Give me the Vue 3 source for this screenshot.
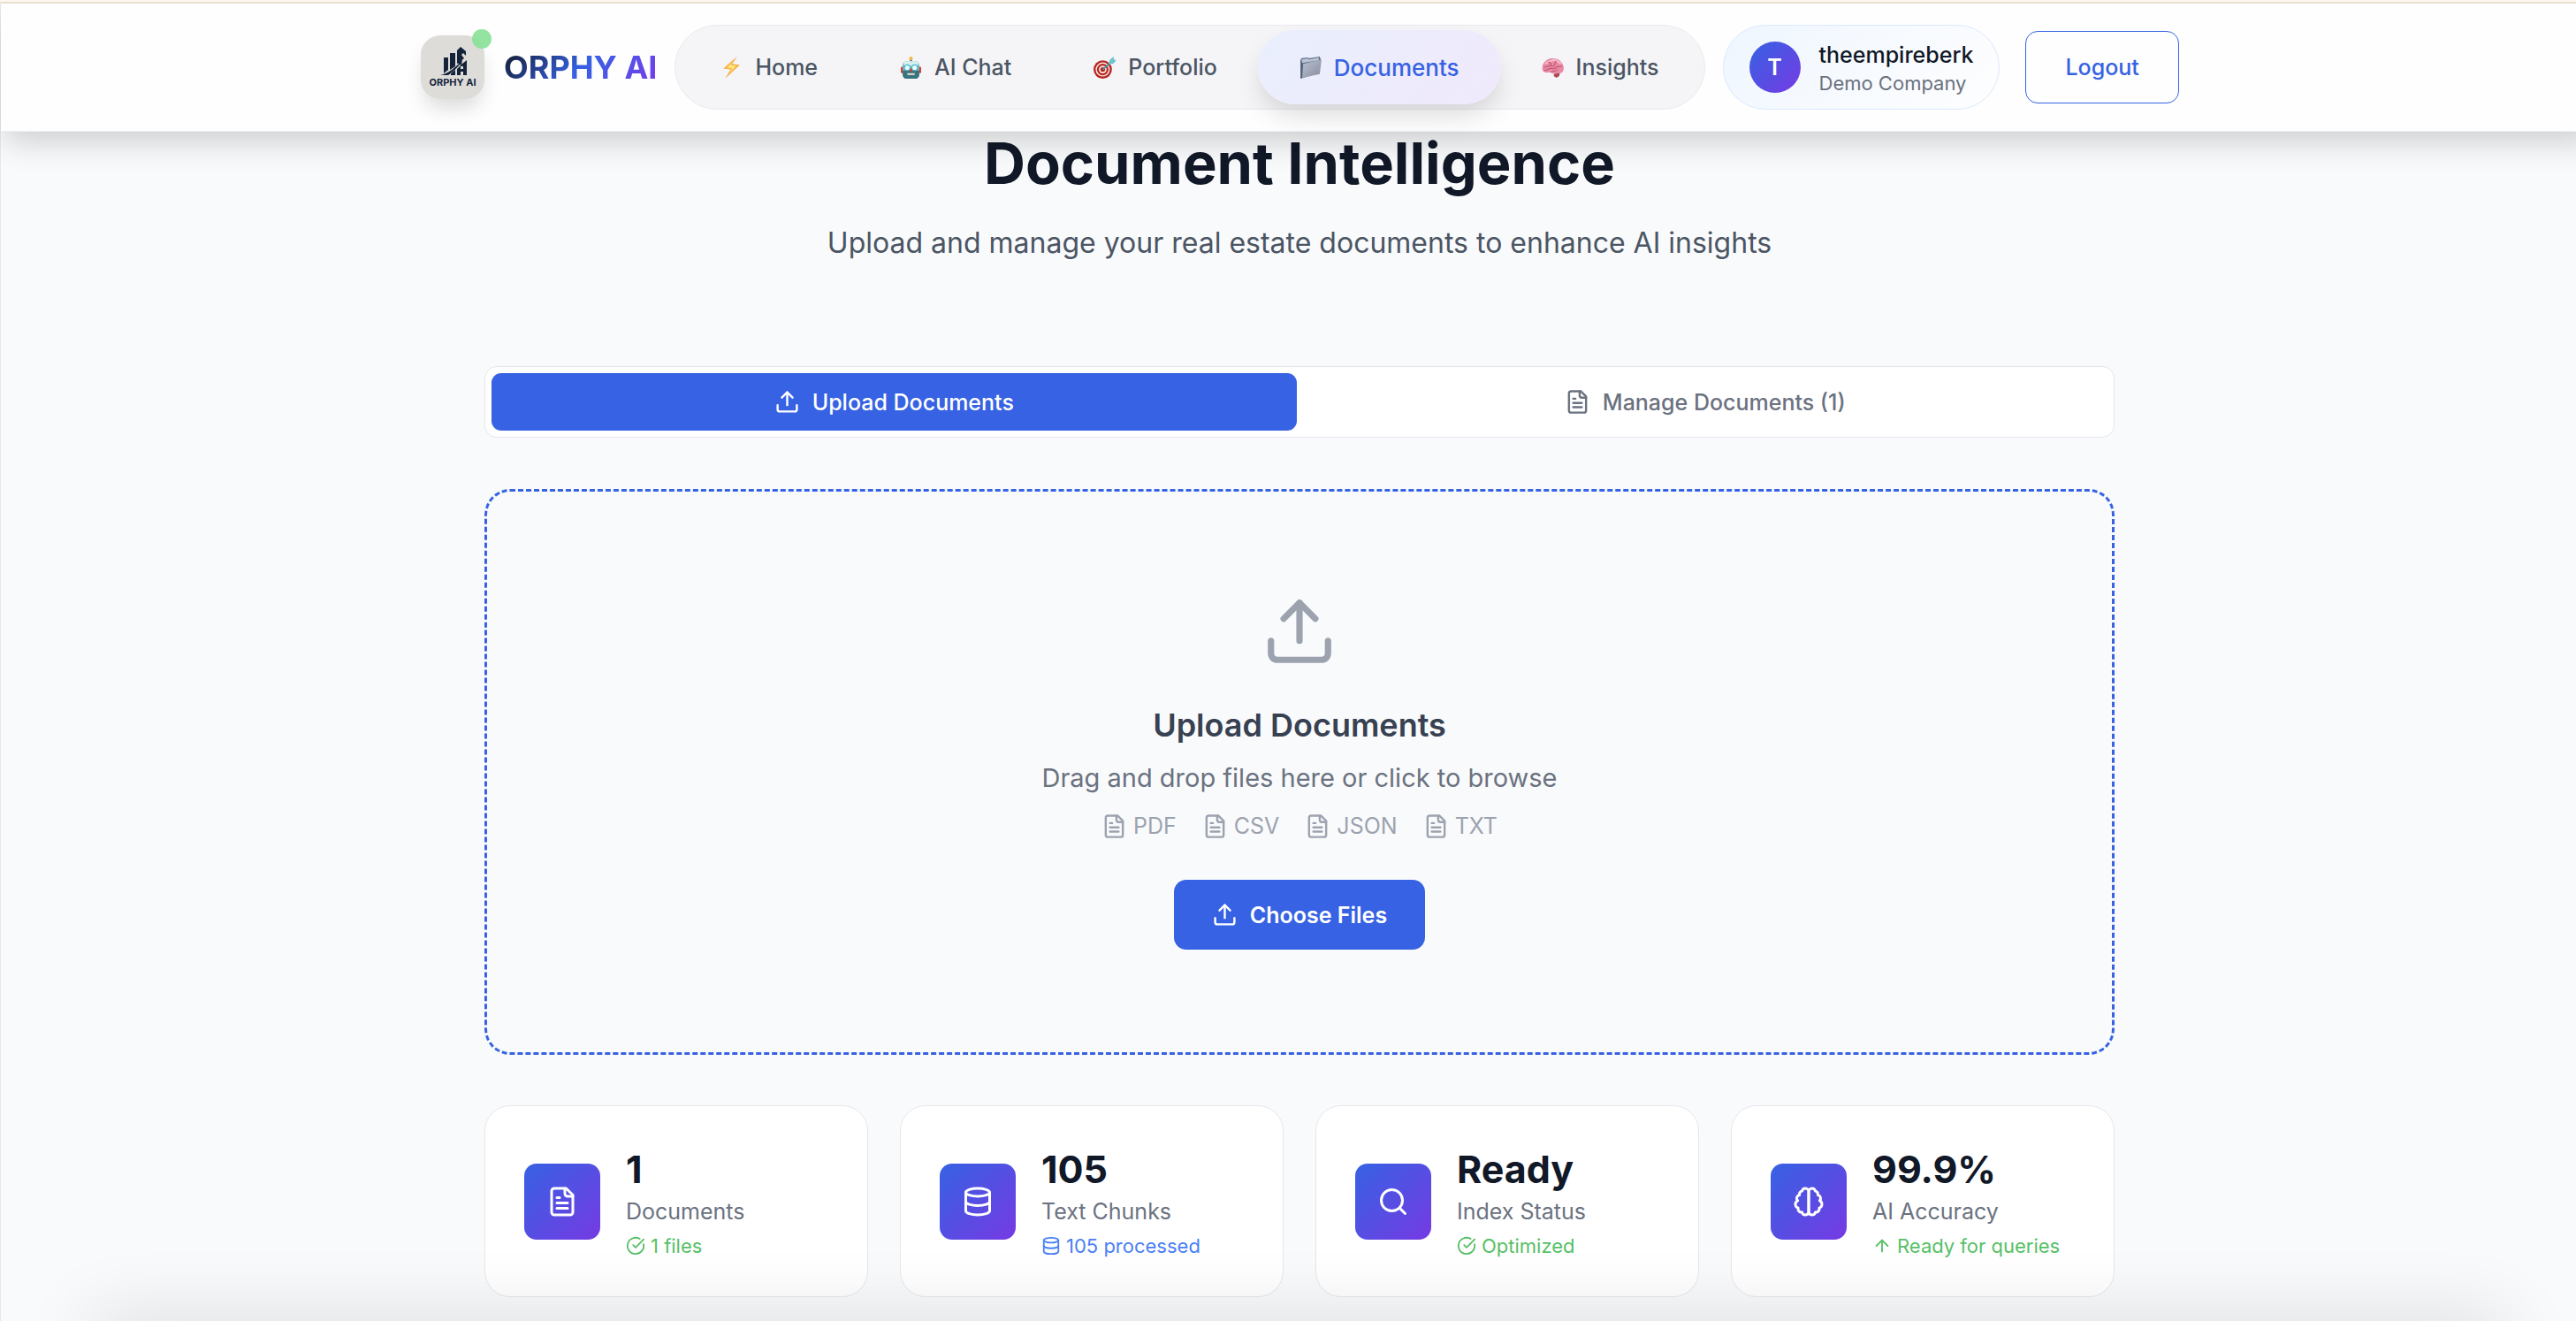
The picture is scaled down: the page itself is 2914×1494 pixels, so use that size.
<script setup>
import { h } from 'vue'

const shapes = {
  upload: [
    'M21 15v4a2 2 0 0 1-2 2H5a2 2 0 0 1-2-2v-4',
    'M17 8l-5-5-5 5',
    'M12 3v12',
  ],
  file: [
    'M15 2H6a2 2 0 0 0-2 2v16a2 2 0 0 0 2 2h12a2 2 0 0 0 2-2V7Z',
    'M14 2v4a2 2 0 0 0 2 2h4',
    'M10 9H8',
    'M16 13H8',
    'M16 17H8',
  ],
  database: [
    'M3 5a9 3 0 1 0 18 0a9 3 0 1 0-18 0',
    'M3 5v14a9 3 0 0 0 18 0V5',
    'M3 12a9 3 0 0 0 18 0',
  ],
  search: ['M3 11a8 8 0 1 0 16 0a8 8 0 1 0-16 0', 'M21 21l-4-4'],
  brain: [
    'M9.5 2A2.5 2.5 0 0 1 12 4.5v15a2.5 2.5 0 0 1-4.96.44 2.5 2.5 0 0 1-2.96-3.08 3 3 0 0 1-.34-5.58 2.5 2.5 0 0 1 1.32-4.24 2.5 2.5 0 0 1 1.98-3A2.5 2.5 0 0 1 9.5 2Z',
    'M14.5 2A2.5 2.5 0 0 0 12 4.5v15a2.5 2.5 0 0 0 4.96.44 2.5 2.5 0 0 0 2.96-3.08 3 3 0 0 0 .34-5.58 2.5 2.5 0 0 0-1.32-4.24 2.5 2.5 0 0 0-1.98-3A2.5 2.5 0 0 0 14.5 2Z',
  ],
  check: ['M21.8 10A10 10 0 1 1 17 3.34', 'M9 11l3 3L22 4'],
  arrow: ['M5 12l7-7 7 7', 'M12 19V5'],
}

const Icon = (props) =>
  h(
    'svg',
    {
      viewBox: '0 0 24 24',
      width: props.size,
      height: props.size,
      fill: 'none',
      stroke: 'currentColor',
      'stroke-width': 2,
      'stroke-linecap': 'round',
      'stroke-linejoin': 'round',
      'aria-hidden': 'true',
    },
    shapes[props.name].map((d) => h('path', { d })),
  )
Icon.props = ['name', 'size']

const links = [
  { id: 'home', label: 'Home' },
  { id: 'chat', label: 'AI Chat' },
  { id: 'portfolio', label: 'Portfolio' },
  { id: 'documents', label: 'Documents', active: true },
  { id: 'insights', label: 'Insights' },
]

const formats = ['PDF', 'CSV', 'JSON', 'TXT']

const stats = [
  { icon: 'file', value: '1', label: 'Documents', noteIcon: 'check', note: '1 files', tone: 'green' },
  { icon: 'database', value: '105', label: 'Text Chunks', noteIcon: 'database', note: '105 processed', tone: 'blue' },
  { icon: 'search', value: 'Ready', label: 'Index Status', noteIcon: 'check', note: 'Optimized', tone: 'green' },
  { icon: 'brain', value: '99.9%', label: 'AI Accuracy', noteIcon: 'arrow', note: 'Ready for queries', tone: 'green' },
]
</script>

<template>
  <div class="page">
    <header class="topbar">
      <div class="topbar-inner">
        <a class="brand" href="#">
          <span class="logo">
            <svg viewBox="0 0 72 72" width="72" height="72" aria-hidden="true">
              <g fill="#14233a">
                <path d="M26 25h5v14l-5 4z" />
                <path d="M33 20h6v15l-6 4z" />
                <path d="M41 17l4-4 6 5v5l-3-3-2 2 3 4-8 6z" />
                <path d="M22 45c8-2 14-6 21-13l-2-1 6-4-1 7-2-1c-5 6-9 9-13 12z" />
                <path fill-rule="evenodd" d="M41 38l6-6 5-4v17H41zM45 35h3v3h-3zM45 41h3v4h-3z" />
                <path d="M34 43l5-4v6h-5z" />
              </g>
              <text x="36" y="57" text-anchor="middle" font-family="Inter, sans-serif" font-size="11" font-weight="700" fill="#14233a">ORPHY AI</text>
            </svg>
            <span class="status-dot"></span>
          </span>
          <span class="brand-name">ORPHY AI</span>
        </a>

        <nav class="nav">
          <a v-for="link in links" :key="link.id" class="nav-link" :class="{ active: link.active }" href="#">
            <svg v-if="link.id === 'home'" viewBox="0 0 24 24" width="25" height="25" aria-hidden="true">
              <path d="M18 0L3 13l8 1-6 10L21 9l-8-1z" fill="#f6b04c" />
              <path d="M15 4L7 12l6 1-4 6 8-9-6-1z" fill="#ffe873" />
            </svg>
            <svg v-else-if="link.id === 'chat'" viewBox="0 0 24 24" width="25" height="25" aria-hidden="true">
              <rect x="1" y="11" width="22" height="7" rx="1" fill="#d43a35" />
              <rect x="11" y="1" width="2" height="5" fill="#51466b" />
              <circle cx="12" cy="2" r="2" fill="#f3b83f" />
              <rect x="3" y="5" width="18" height="19" rx="4" fill="#79b5bd" />
              <path d="M3 15h18v5a4 4 0 0 1-4 4H7a4 4 0 0 1-4-4z" fill="#38747f" />
              <rect x="4" y="5" width="16" height="5" rx="3" fill="#d8f0ee" />
              <circle cx="8" cy="12" r="3" fill="#e9feff" stroke="#42b9ce" />
              <circle cx="16" cy="12" r="3" fill="#e9feff" stroke="#42b9ce" />
              <path d="M12 12l2 4h-4z" fill="#d43a35" />
              <path d="M8 18h8v2H8z" fill="#e9d9d0" />
            </svg>
            <svg v-else-if="link.id === 'portfolio'" viewBox="0 0 24 24" width="25" height="25" aria-hidden="true">
              <circle cx="10" cy="14" r="10" fill="#b9251f" />
              <circle cx="10" cy="14" r="7" fill="none" stroke="#f7e9e6" stroke-width="1.4" />
              <circle cx="10" cy="14" r="3.4" fill="none" stroke="#f7e9e6" stroke-width="1.6" />
              <path d="M10 14l8-7" stroke="#3e98a6" stroke-width="1.6" />
              <path d="M16 8l2-5 4-3v3l3 1-4 4z" fill="#6fc3cc" />
            </svg>
            <svg v-else-if="link.id === 'documents'" viewBox="0 0 24 24" width="25" height="25" aria-hidden="true">
              <path d="M1 4l1-2 7-1 1 1 12-2 1 3-2 15L1 24z" fill="#56667f" />
              <path d="M2 3l7-1 1 1 11-2v3L3 7z" fill="#b9c3d3" />
              <path d="M4 8l20-5-2 16-19 4z" fill="url(#folder)" />
              <defs>
                <linearGradient id="folder" x1="0" y1="0" x2="1" y2="1">
                  <stop offset="0" stop-color="#bcc2cf" />
                  <stop offset="1" stop-color="#858c9f" />
                </linearGradient>
              </defs>
            </svg>
            <svg v-else viewBox="0 0 24 24" width="25" height="25" aria-hidden="true">
              <path d="M14 17h6l-1 4-3 2-3-2z" fill="#a94b54" />
              <path d="M1 15C-1 9 4 3 10 2c7-1 13 3 14 10 0 5-3 7-7 6-3 2-6 0-8-1-4 1-7 0-8-2z" fill="#e98aa4" />
              <path d="M4 8c3-3 5-3 8-4 4-1 7 2 9 4" stroke="#f8bccb" stroke-width="2" fill="none" />
              <path d="M3 12c2-3 5 0 7-3M7 6c2 0 3 1 3 3s3 2 4 0 0-3 2-4M3 15c4 0 5-3 8-2s4-1 6-2 3 1 5-1M10 17c2-2 5 0 7-3" stroke="#bd5470" fill="none" />
            </svg>
            <span>{{ link.label }}</span>
          </a>
        </nav>

        <div class="user">
          <span class="avatar">T</span>
          <span class="user-text">
            <span class="user-name">theempireberk</span>
            <span class="user-company">Demo Company</span>
          </span>
        </div>

        <button class="logout" type="button">Logout</button>
      </div>
    </header>

    <main class="content">
      <h1>Document Intelligence</h1>
      <p class="lead">Upload and manage your real estate documents to enhance AI insights</p>

      <div class="tabs">
        <button class="tab active" type="button"><Icon name="upload" size="29" />Upload Documents</button>
        <button class="tab" type="button"><Icon name="file" size="29" />Manage Documents (1)</button>
      </div>

      <section class="dropzone">
        <Icon class="drop-icon" name="upload" size="86" />
        <h2>Upload Documents</h2>
        <p class="hint">Drag and drop files here or click to browse</p>
        <ul class="formats">
          <li v-for="format in formats" :key="format"><Icon name="file" size="29" />{{ format }}</li>
        </ul>
        <button class="choose" type="button"><Icon name="upload" size="29" />Choose Files</button>
      </section>

      <section class="stats">
        <article v-for="stat in stats" :key="stat.label" class="stat">
          <span class="stat-icon"><Icon :name="stat.icon" size="36" /></span>
          <div class="stat-body">
            <div class="stat-value">{{ stat.value }}</div>
            <div class="stat-label">{{ stat.label }}</div>
            <div class="stat-note" :class="stat.tone"><Icon :name="stat.noteIcon" size="22" />{{ stat.note }}</div>
          </div>
        </article>
      </section>
    </main>
    <div class="bottom-shade"></div>
  </div>
</template>

<style>
body {
  background: #f9fafc;
  overflow: hidden;
}
</style>

<style scoped>
.page {
  box-sizing: border-box;
  min-height: 100vh;
  margin-right: -25px;
  border-left: 1px solid #e7e7ee;
  font-family: Inter, 'Liberation Sans', sans-serif;
  font-size: 25px;
  color: #111827;
}

.page * {
  box-sizing: border-box;
}

a {
  color: inherit;
  text-decoration: none;
}

button {
  font: inherit;
  cursor: pointer;
}

svg {
  display: block;
  flex: none;
}

.topbar {
  position: relative;
  z-index: 2;
  background: #fefefe;
  border-top: 2px solid #e9dfcf;
  border-bottom: 1px solid #eeefef;
  margin-top: 2px;
  box-shadow: 0 16px 32px -4px rgba(0, 0, 0, 0.17);
}

.topbar::before {
  content: '';
  position: absolute;
  left: 0;
  right: 0;
  top: -4px;
  height: 2px;
  background: #fdf7ee;
}

.topbar-inner {
  display: flex;
  align-items: center;
  width: 1988px;
  margin: 0 auto;
  padding: 24px 0;
}

.brand {
  display: flex;
  align-items: center;
  gap: 22px;
  margin-right: 20px;
}

.logo {
  position: relative;
  width: 72px;
  height: 72px;
  border-radius: 22px;
  background: #dedcd8;
  box-shadow: 0 14px 22px -4px rgba(0, 0, 0, 0.14);
}

.status-dot {
  position: absolute;
  top: -7px;
  right: -8px;
  width: 22px;
  height: 22px;
  border-radius: 50%;
  background: #87e197;
  opacity: 0.9;
}

.brand-name {
  font-size: 36px;
  font-weight: 700;
  line-height: 44px;
  background: linear-gradient(135deg, #111827 0%, #3662e3 50%, #7c3aed 100%);
  background-clip: text;
  color: transparent;
  white-space: nowrap;
}

.nav {
  display: flex;
  gap: 3px;
  height: 96px;
  padding: 5px 6px;
  border: 1px solid #ebebee;
  border-radius: 48px;
  background: #f5f5f8;
}

.nav-link {
  display: flex;
  align-items: center;
  gap: 14px;
  padding: 0 45px;
  border-radius: 42px;
  color: #4b5563;
  font-weight: 500;
  white-space: nowrap;
}

.nav-link.active {
  margin: 0 -2px;
  padding: 0 47px;
  color: #3662e3;
  font-size: 26px;
  background: linear-gradient(135deg, #e9effd, #f0e9fc);
  box-shadow: 0 16px 30px -4px rgba(0, 0, 0, 0.14);
}

.user {
  display: flex;
  align-items: center;
  gap: 21px;
  height: 96px;
  margin-left: 20px;
  padding: 0 29px;
  border: 1px solid #dbeafe;
  border-radius: 48px;
  background: linear-gradient(135deg, #eff6ff, #fefefe);
}

.avatar {
  display: grid;
  place-items: center;
  width: 58px;
  height: 58px;
  border-radius: 50%;
  color: #fff;
  font-weight: 600;
  background: linear-gradient(135deg, #3662e3, #763ae3);
}

.user-text {
  display: flex;
  flex-direction: column;
  padding-top: 4px;
}

.user-name {
  font-weight: 500;
  line-height: 32px;
}

.user-company {
  font-size: 22px;
  line-height: 32px;
  color: #6b7280;
}

.logout {
  height: 82px;
  margin-left: 29px;
  padding: 0 44px;
  border: 1px solid #3662e3;
  border-radius: 14px;
  background: transparent;
  color: #3662e3;
  font-weight: 500;
}

.content {
  width: 1844px;
  margin: 0 auto;
}

h1 {
  margin: 0;
  font-size: 65px;
  font-weight: 700;
  line-height: 72px;
  text-align: center;
}

.lead {
  margin: 28px 0 113px;
  font-size: 32px;
  line-height: 52px;
  text-align: center;
  color: #4b5563;
}

.tabs {
  display: flex;
  gap: 7px;
  padding: 7px;
  border: 1px solid #e5e7eb;
  border-radius: 14px;
  background: #fff;
}

.tab {
  display: flex;
  flex: 1;
  align-items: center;
  justify-content: center;
  gap: 14px;
  height: 65px;
  border: 0;
  border-radius: 11px;
  background: transparent;
  color: #6b7280;
  font-weight: 500;
}

.tab.active {
  background: #3662e3;
  color: #fff;
}

.dropzone {
  display: flex;
  flex-direction: column;
  align-items: center;
  margin-top: 58px;
  padding: 115px 0 116px;
  border: 3px dashed #3662e3;
  border-radius: 29px;
}

.drop-icon {
  color: #9ca3af;
}

h2 {
  margin: 36px 0 0;
  font-size: 36px;
  font-weight: 600;
  line-height: 54px;
  color: #374151;
}

.hint {
  margin: 11px 0 13px;
  font-size: 29px;
  line-height: 44px;
  color: #6b7280;
}

.formats {
  display: flex;
  gap: 29px;
  margin: 0 0 42px;
  padding: 0;
  list-style: none;
  line-height: 38px;
  color: #9ca3af;
}

.formats li {
  display: flex;
  align-items: center;
  gap: 7px;
}

.choose {
  display: flex;
  align-items: center;
  gap: 14px;
  height: 79px;
  padding: 0 43px;
  border: 0;
  border-radius: 14px;
  background: #3662e3;
  color: #fff;
  font-weight: 600;
}

.stats {
  display: grid;
  grid-template-columns: repeat(4, 1fr);
  gap: 36px;
  margin-top: 57px;
}

.stat {
  display: flex;
  align-items: center;
  gap: 29px;
  padding: 39px 44px;
  border: 1px solid #e5e7eb;
  border-radius: 29px;
  background: #fff;
}

.stat-icon {
  display: grid;
  place-items: center;
  flex: none;
  width: 86px;
  height: 86px;
  border-radius: 14px;
  color: #fff;
  background: linear-gradient(135deg, #3662e3, #763ae3);
}

.stat-body {
  padding-top: 5px;
}

.stat-value {
  font-size: 43px;
  font-weight: 700;
  line-height: 54px;
}

.stat-label {
  line-height: 42px;
  color: #6b7280;
}

.stat-note {
  display: flex;
  align-items: center;
  gap: 6px;
  font-size: 22px;
  line-height: 36px;
}

.green {
  color: #57bf67;
}

.blue {
  color: #4a80f5;
}

.bottom-shade {
  position: fixed;
  z-index: 3;
  left: 105px;
  right: 80px;
  bottom: -40px;
  height: 40px;
  box-shadow: 0 0 80px rgba(0, 0, 0, 0.17);
  pointer-events: none;
}
</style>
